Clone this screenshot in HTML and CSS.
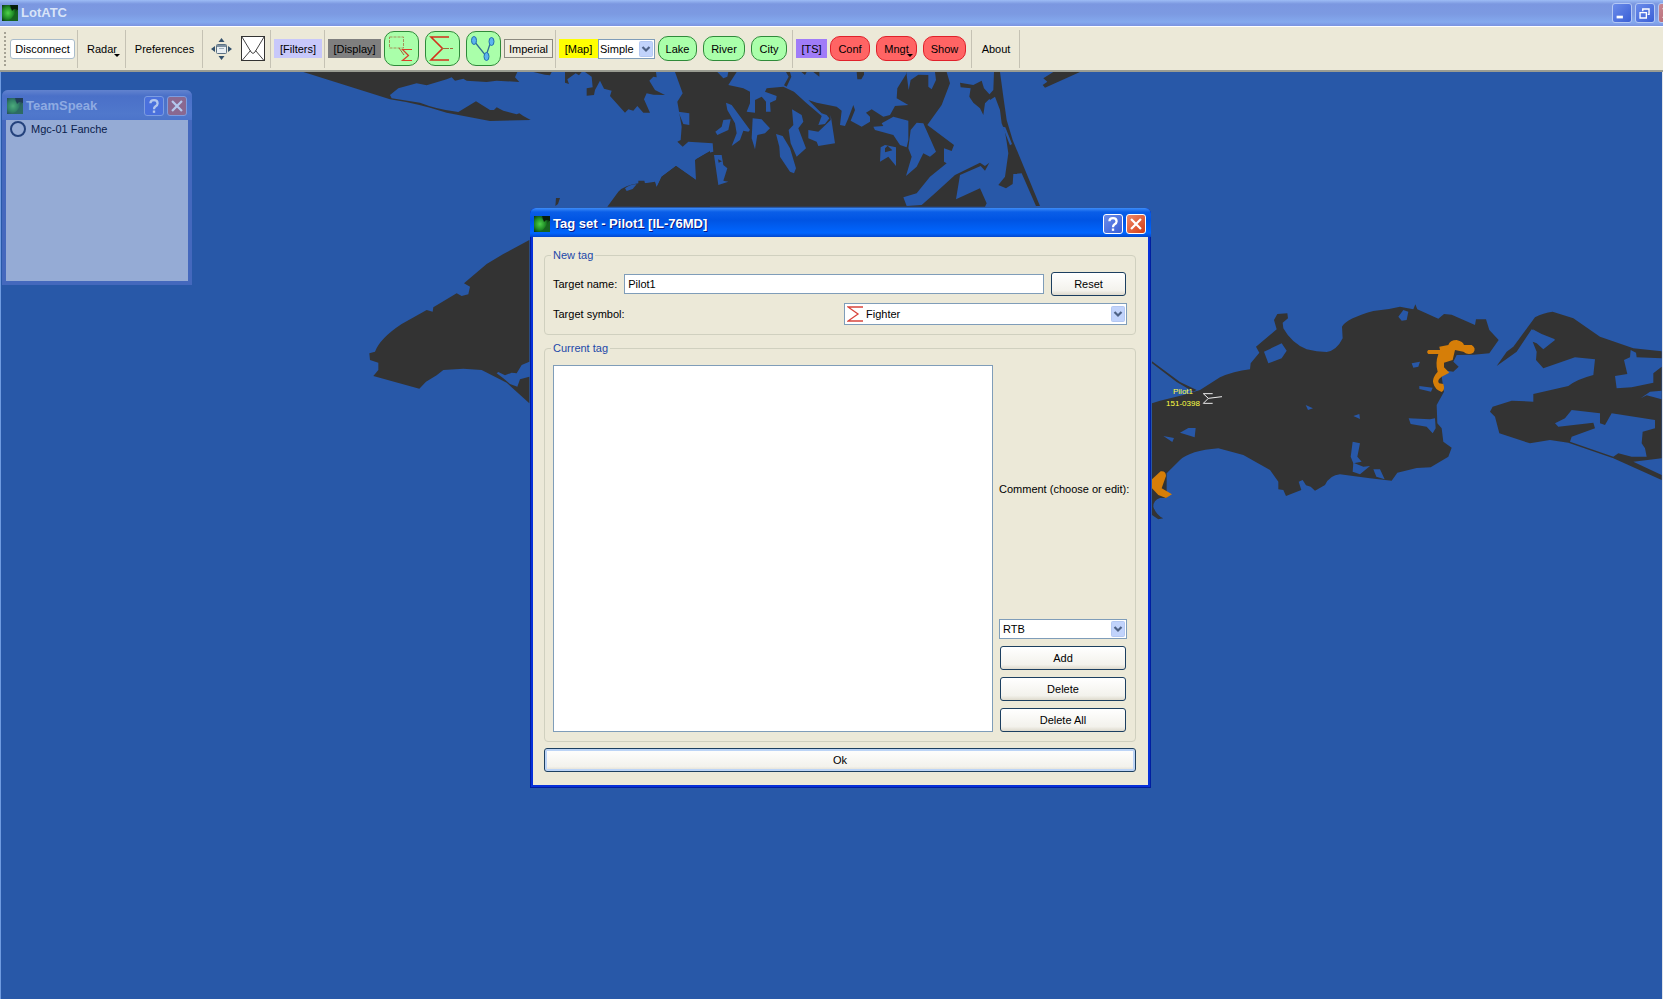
FILE: index.html
```html
<!DOCTYPE html>
<html lang="en">

<head>
    <meta charset="UTF-8" />
    <title>LotATC</title>
    <link rel="stylesheet" href="styles.css">
</head>

<body>
    <!-- shared symbols -->
    <svg class="defs" width="0" height="0" aria-hidden="true">
        <defs>
            <radialGradient id="radar" cx="0.4" cy="0.5" r="0.6">
                <stop offset="0" stop-color="#4fd24a" />
                <stop offset="0.6" stop-color="#1f8a26" />
                <stop offset="1" stop-color="#0c3a12" />
            </radialGradient>
            <symbol id="app-icon" viewBox="0 0 16 16">
                <rect width="16" height="16" fill="#17641f" />
                <path d="M0 0l7 1 2 3 6 1-3 5-3 4-5 2H0z" fill="url(#radar)" />
                <path d="M8 0h8v5l-4-1-2 2z" fill="#061d0a" />
            </symbol>
            <symbol id="arrow" viewBox="0 0 14 16">
                <rect x="0.5" y="0.5" width="13" height="15" rx="1" fill="#c1d3fb" stroke="#b4c8f2" />
                <path d="M3.5 6l3.5 3.5L10.5 6" fill="none" stroke="#4d6185" stroke-width="2.2" />
            </symbol>
            <symbol id="question" viewBox="0 0 20 20">
                <path d="M6 7Q6 3.500 10 3.500t4 3.600Q14 9 11.500 10.500 10 11.500 10 13.500" fill="none" stroke="currentColor" stroke-width="2.500" />
                <rect x="8.700" y="15" width="2.600" height="2.600" fill="currentColor" />
            </symbol>
            <symbol id="cross" viewBox="0 0 20 20">
                <path d="M4.500 4.500l11 11M15.500 4.500l-11 11" stroke="currentColor" stroke-width="2.500" />
            </symbol>
        </defs>
    </svg>

    <header class="titlebar">
        <svg class="app-icon"><use href="#app-icon" /></svg>
        <h1>LotATC</h1>
        <div class="window-buttons">
            <button class="win-btn" aria-label="Minimize"><svg viewBox="0 0 20 20"><rect x="4" y="13" width="7" height="3" fill="#fff" /></svg></button>
            <button class="win-btn" aria-label="Restore"><svg viewBox="0 0 20 20"><path d="M4.500 9.500h7v6h-7zM4 9.500h8M7.500 8V5.500h7v6H13M7 5.500h8" fill="none" stroke="#fff" stroke-width="1.500" /></svg></button>
            <button class="win-btn close" aria-label="Close"><svg><use href="#cross" /></svg></button>
        </div>
    </header>

    <nav class="toolbar">
        <span class="handle"></span>
        <div class="group"><button class="btn disconnect">Disconnect</button></div>
        <div class="group"><button class="flat menu">Radar</button></div>
        <div class="group"><button class="flat prefs">Preferences</button></div>
        <div class="group">
            <button class="icon-btn" aria-label="Center">
                <svg width="21" height="22" viewBox="0 0 21 22">
                    <rect x="5.500" y="6.500" width="10" height="9" rx="1" fill="#e8eef2" stroke="#5a7184" />
                    <path d="M6 8h9" stroke="#5a7184" stroke-width="1.500" />
                    <path d="M8 10.500h5" stroke="#9fb0bc" />
                    <path d="M10.500 0l3 4h-6zM10.500 22l3-4h-6zM0 11l4-3v6zM21 11l-4-3v6z" fill="#33506b" />
                </svg>
            </button>
            <button class="icon-btn" aria-label="Messages">
                <svg width="24" height="26" viewBox="0 0 24 26">
                    <rect x="0.500" y="0.500" width="23" height="24" fill="#fff" stroke="#333" />
                    <path d="M1 1l9 15q2 3 4 0L23 1M1 24.500l8.500-10M23 24.500l-8.500-10" fill="none" stroke="#444" />
                </svg>
            </button>
        </div>
        <div class="group"><span class="caption filters">[Filters]</span></div>
        <div class="group">
            <span class="caption display">[Display]</span>
            <button class="pill tall" aria-label="Selection symbols">
                <svg viewBox="0 0 33 33">
                    <rect x="4.500" y="5" width="14" height="11" fill="none" stroke="#a5925a" stroke-dasharray="3 1" />
                    <path d="M14 16l5 7" stroke="#a06a3a" />
                    <path d="M27 17.500H17.500l6 6-6 5h9.500" fill="none" stroke="#d8402a" stroke-width="1.200" />
                </svg>
            </button>
            <button class="pill tall" aria-label="Symbols">
                <svg viewBox="0 0 33 33">
                    <path d="M23 5H5l11.500 11.500L5 28h18" fill="none" stroke="#d3301c" stroke-width="1.600" />
                    <path d="M16 16.500h11" stroke="#a06a3a" stroke-dasharray="7 1" />
                </svg>
            </button>
            <button class="pill tall" aria-label="Links">
                <svg viewBox="0 0 33 33">
                    <path d="M7 9l12 15 5-15" fill="none" stroke="#2f6f8f" stroke-width="1.300" />
                    <g fill="#5cb4ee" stroke="#2370ae">
                        <ellipse cx="7" cy="8.500" rx="2.500" ry="4" />
                        <ellipse cx="24.500" cy="9.500" rx="2.500" ry="4" />
                        <ellipse cx="19.500" cy="24.500" rx="2.500" ry="4" />
                    </g>
                </svg>
            </button>
            <button class="unit">Imperial</button>
        </div>
        <div class="group">
            <span class="caption map-caption">[Map]</span>
            <div class="combo combo-map">
                <select aria-label="Map style"><option>Simple</option></select>
                <svg class="combo-arrow"><use href="#arrow" /></svg>
            </div>
            <button class="pill lake">Lake</button>
            <button class="pill river">River</button>
            <button class="pill city">City</button>
        </div>
        <div class="group">
            <span class="caption ts">[TS]</span>
            <button class="pill red conf">Conf</button>
            <button class="pill red mngt menu">Mngt</button>
            <button class="pill red show">Show</button>
        </div>
        <div class="group"><button class="flat about">About</button></div>
    </nav>

    <main class="map">
        <svg class="terrain" width="1663" height="927" viewBox="0 72 1663 927" aria-hidden="true">
            <!-- north west coast -->
            <g transform="translate(290 60) scale(0.33333)" fill="#333">
                <path d="M40 36L300 118Q380 130 470 158L600 183L722 180L700 168L688 160L680 163L640 152L620 142L612 150L600 150L558 124L505 156Q440 148 390 128L305 115L300 105L325 85L380 70L410 76L470 58L485 52L495 62L520 56L530 62L590 66L620 62L688 66L675 52L682 36Z" />
                <path d="M730 36h55l-5 10-15-2zM825 36v32l12 4-5-14 25-18 10 6 8-10z" />
                <path d="M885 36L905 50L908 82L890 85V107L912 105L915 90L930 62L942 86L965 92L960 108L1005 158L1015 148L1030 152L1042 138L1060 158H1080L1062 118L1070 100L1090 104L1125 105L1095 90L1078 62L1090 50L1100 52L1098 36Z" />
                <path d="M952 440L985 395Q1005 375 1045 370V362H1063L1065 370H1095L1100 382L1115 350L1158 318L1218 360L1215 300L1260 273V440Z" />
                <path d="M798 414h12l-6 18-8 6z" />
                <path d="M718 540L640 582L590 612L522 670L540 680L535 703L515 708L500 700L430 742L428 755L410 750L335 792Q270 835 255 875L238 880L240 900L265 908V930L250 948L388 986L408 965L440 946L460 930L520 926L575 930L650 968L718 1030V950L690 958L682 980L660 972L640 955L620 940L625 936L645 946L665 938L680 940L695 915L718 905Z" />
                <path d="M1005 385q20-14 35-12l-12 14-18 6z" fill="#2858a8" />
            </g>
            <!-- north shore -->
            <g transform="translate(640 60) scale(0.33333)">
                <path fill="#333" d="M105 36L128 100L112 125L125 200L122 240L112 245L128 260L145 245L218 250L220 275L200 280L168 298V360L108 318L65 350L50 382L45 365L0 372V440H1035L1040 430L1020 385L948 418L960 345L1022 318L1035 332L1048 308L1035 318L1020 308L945 345L885 400L845 435L800 438L790 412L830 400L870 350L920 310L912 305V265L935 273L942 255L862 195L905 135L930 70L920 36Z" />
                <g fill="#2858a8">
                    <path d="M290 36L265 75L310 85L330 95V130L320 155L345 158V120L365 110L378 125V155H392L390 128L408 120L410 108L375 95L380 85L430 80L462 95L500 130L545 168L535 195L555 192L568 175L560 165L545 160L505 120L530 128L590 140L605 152L600 195L615 198L625 175L640 135L645 150L632 182L665 200L690 185V170L678 158L695 148L730 170L750 165L765 138L805 135L770 115L772 85L800 40V36Z" />
                    <path d="M800 45L806 90L812 60L835 44L865 45V80L875 88L888 60L885 36H800Z" />
                    <path d="M258 128L275 135L330 210L325 215L310 212L300 240L275 258L290 220L285 190L262 150Z" />
                    <path d="M250 180L272 178L265 210L232 225L226 215L245 200Z" />
                    <path d="M338 175L365 178L390 205L375 220L352 225L345 268L335 235Z" />
                    <path d="M408 222L428 228L450 265L468 325L462 340L450 335L420 290L418 260Z" />
                    <path d="M456 148L485 165L490 185L475 205L498 265L470 290L452 250L446 210L460 195Z" />
                    <path d="M572 165L585 250L535 258L530 245L505 235V210L535 215L572 180Z" />
                    <path d="M700 200L730 198L725 190L760 170L805 182V240L800 262L780 255L760 225L705 210Z" />
                    <path d="M830 188L850 190L888 275L870 290L850 280L830 320L798 348L815 290L805 265L812 210Z" />
                    <path d="M722 262L735 255L768 262V318L745 290L720 305Z" />
                    <path d="M115 155L148 160V195L130 192Z" />
                    <path d="M222 285H245L250 315L262 325L250 362L265 365L235 375Z" />
                    <path d="M232 36H265L262 50L250 55Z" />
                </g>
                <g fill="#333">
                    <path d="M438 36l8 14-14 26 8 4 14-30-4-14zM484 36l11 9 5-9zM520 36l18 14V36zM650 36h22v8l-8 14h-12z" />
                    <path d="M735 265l8-8 14 14-22 6zM234 298l12 6-10 4z" />
                    <path d="M960 68L1000 75L1025 62L1032 85L1055 110L1035 130L1030 165L1020 145L1000 128L988 110L992 85L962 82Z" />
                    <path d="M1062 36H1080L1090 110L1100 180L1118 240L1200 438H1188L1145 340L1120 342L1118 372L1098 385L1075 375L1095 350L1105 280L1100 245L1095 215L1085 190L1080 150L1065 110L1050 120L1044 108L1060 90Z" />
                    <path d="M1210 55L1240 36H1320L1215 83L1208 75L1222 65Z" />
                </g>
                <path fill="#2858a8" d="M1088 200l8 2 20 50-6 4z" />
            </g>
            <!-- eastern peninsula -->
            <g transform="translate(1140 280) scale(0.33333)">
                <g fill="#333">
                    <path d="M36 370L60 362L130 345L180 330L240 292Q280 274 330 268L332 250L358 218L348 200L410 148L402 120L412 102L442 100L444 115L428 128L430 145Q455 190 500 208Q530 216 560 216Q590 212 608 175L606 140Q620 115 700 93Q740 90 780 80L820 88L826 73L832 88L895 116L912 102L935 104L1005 135L1008 118H1038L1048 150L1076 180L1048 220L1000 224L950 225L940 245L956 260L940 275L920 272L905 290L912 335L890 375L892 430L905 445L910 485L935 503L925 530L872 562L830 564L772 578L755 602L690 595L600 583Q570 585 555 615L525 632L512 620L498 616L488 600L476 605L484 630L438 648L430 630L415 628V605L390 570L310 525L235 505Q150 512 120 540L80 580V654H60Q40 660 40 680Q48 705 70 715L55 718L36 705Z" />
                    <path d="M36 244L120 306L170 330L160 335L110 306L36 250Z" />
                    <path d="M1070 258L1100 215L1120 200L1185 112Q1210 98 1238 95L1300 115L1380 170L1480 205L1565 214V235L1490 232L1488 218L1472 210L1470 232L1452 240L1462 282L1425 288L1430 325L1475 322L1540 308V280L1565 260V420L1545 420L1415 400L1395 435L1380 430V400L1295 390L1275 415L1245 430L1255 440L1360 428L1365 445L1295 470L1290 485L1420 530L1435 520L1475 530H1520L1515 505L1505 490L1508 455L1545 445V418H1565V535L1480 545L1565 585V600L1420 535L1285 488L1230 480L1170 490L1078 460L1065 410L1050 395L1058 380L1115 362L1180 365V342L1285 318Q1310 298 1360 285L1365 238L1305 232L1210 265L1188 240L1190 215L1178 185L1190 190L1210 208L1245 180L1205 165L1175 148L1130 215Z" />
                </g>
                <g fill="#2858a8">
                    <path d="M372 215L425 190L440 212L425 235L385 250ZM775 110L790 90L805 95L800 120L785 122Z" />
                    <path d="M815 250l25-5-5 15-15 3zM838 318l40 5-5 12-35-8zM497 375l22 10-15 5zM640 408l18-6 2 15z" />
                    <path d="M806 415L870 418L885 415L887 445L878 460L860 440L812 432ZM638 485L660 490L652 530L665 545L640 550L632 530Z" />
                    <path d="M640 548L670 560L690 558L660 583L638 575ZM700 568l20 0 14 30-25-8zM120 458l25-14h22l-3 28zM70 468l32 6-5 12z" />
                    <path d="M1502 355L1530 335L1565 332V358L1520 346ZM1178 148L1205 162L1245 178L1210 205L1195 185Z" />
                </g>
                <g fill="#d67e08">
                    <path d="M865 210H900L898 200L925 195Q930 180 950 180Q970 185 972 195H995Q1010 205 1000 218Q985 228 970 215L945 210L938 240L912 248V262L928 278L905 290Q890 300 897 310L910 312Q916 330 905 336Q885 330 880 310Q875 295 893 275Q885 250 895 222H865Q858 216 865 210Z" />
                    <path d="M36 598L62 574Q78 572 78 588L65 625L96 643L78 654L55 645L36 625Z" />
                </g>
                <path d="M218 341H190L205 355L190 370H218M205 355L246 350" fill="none" stroke="#eee" stroke-width="3" />
            </g>
        </svg>

        <div class="pilot">
            <span>Pilot1</span>
            <span>151-0398</span>
        </div>

        <section class="teamspeak">
            <header class="ts-title">
                <svg class="app-icon"><use href="#app-icon" /></svg>
                <h2>TeamSpeak</h2>
                <button class="win-btn" aria-label="Help"><svg><use href="#question" /></svg></button>
                <button class="win-btn close" aria-label="Close"><svg><use href="#cross" /></svg></button>
            </header>
            <ul class="ts-list">
                <li><span class="status"></span>Mgc-01 Fanche</li>
            </ul>
        </section>

        <section class="dialog" role="dialog" aria-labelledby="dialog-title">
            <header class="dialog-title">
                <svg class="app-icon"><use href="#app-icon" /></svg>
                <h2 id="dialog-title">Tag set - Pilot1 [IL-76MD]</h2>
                <button class="win-btn" aria-label="Help"><svg><use href="#question" /></svg></button>
                <button class="win-btn close" aria-label="Close"><svg><use href="#cross" /></svg></button>
            </header>
            <form class="dialog-body" onsubmit="return false">
                <fieldset>
                    <legend>New tag</legend>
                    <div class="row">
                        <label for="name">Target name:</label>
                        <input id="name" class="name" type="text" value="Pilot1">
                        <button class="btn reset" type="button">Reset</button>
                    </div>
                    <div class="row">
                        <label for="symbol">Target symbol:</label>
                        <div class="combo combo-symbol">
                            <select id="symbol"><option>Fighter</option></select>
                            <svg class="sigma" viewBox="0 0 16 16"><path d="M16 1H1l10 7-10 7h15" fill="none" stroke="#d8453c" stroke-width="1.300" /></svg>
                            <svg class="combo-arrow"><use href="#arrow" /></svg>
                        </div>
                    </div>
                </fieldset>
                <fieldset>
                    <legend>Current tag</legend>
                    <div class="columns">
                        <select class="tag-list" multiple aria-label="Current tag"></select>
                        <div class="side">
                            <label for="comment">Comment (choose or edit):</label>
                            <div class="combo">
                                <select id="comment"><option>RTB</option></select>
                                <svg class="combo-arrow"><use href="#arrow" /></svg>
                            </div>
                            <button class="btn" type="button">Add</button>
                            <button class="btn" type="button">Delete</button>
                            <button class="btn" type="button">Delete All</button>
                        </div>
                    </div>
                </fieldset>
                <button class="btn ok" type="submit">Ok</button>
            </form>
        </section>
    </main>
</body>

</html>
```

FILE: styles.css
```css
* {
    box-sizing: border-box;
}

body {
    margin: 0;
    height: 100vh;
    display: flex;
    flex-direction: column;
    overflow: hidden;
    font-family: "Liberation Sans", Arial, sans-serif;
    font-size: 11px;
    color: #000;
}

button,
input,
select {
    font: inherit;
    color: inherit;
    padding: 0;
    margin: 0;
}

h1,
h2 {
    margin: 0;
    flex: 1;
    font-size: 13px;
    line-height: 16px;
}

.defs {
    position: absolute;
}

.app-icon {
    width: 16px;
    height: 16px;
    flex-shrink: 0;
}

/* main window title */
.titlebar {
    display: flex;
    align-items: center;
    gap: 3px;
    height: 26px;
    padding-left: 2px;
    flex-shrink: 0;
    background: linear-gradient(#9dbcf5 0, #7b97e0 4px, #7c9ae2 14px, #84a9ee 22px, #7b93e0 26px);
    color: #d8e4f8;
}

.window-buttons {
    display: flex;
    gap: 3px;
    margin-right: -15px;
}

.win-btn {
    width: 20px;
    height: 20px;
    flex-shrink: 0;
    border: 1px solid #b4c8f5;
    border-radius: 3px;
    background: linear-gradient(135deg, #6b8cea, #3a5fd6);
    color: #fff;
}

.win-btn svg {
    display: block;
    width: 18px;
    height: 18px;
}

.win-btn.close {
    background: linear-gradient(135deg, #c98a94, #b0606c);
}

/* toolbar */
.toolbar {
    display: flex;
    align-items: center;
    height: 46px;
    flex-shrink: 0;
    padding-left: 4px;
    border-top: 1px solid #fff;
    border-bottom: 2px solid #9a9c92;
    background: #ece9d8;
}

.handle {
    width: 2px;
    height: 34px;
    margin-right: 1px;
    background: repeating-linear-gradient(#a5a294 0, #a5a294 2px, #ece9d8 2px, #ece9d8 4px);
}

.group {
    display: flex;
    align-items: center;
    height: 38px;
    padding: 0 2px 0 3px;
    border-right: 1px solid #c5c2b4;
}

.flat,
.icon-btn {
    height: 22px;
    border: 0;
    background: none;
}

.btn {
    height: 24px;
    border: 1px solid #1c3f60;
    border-radius: 3px;
    background: linear-gradient(#fff, #f3f2ec 80%, #dedacd);
}

.disconnect {
    width: 65px;
    height: 20px;
    border-color: #a9bccb;
    background: #fff;
}

.flat {
    width: 42px;
}

.flat.prefs {
    width: 71px;
}

.menu {
    position: relative;
}

.menu::after {
    content: "";
    position: absolute;
    right: 3px;
    bottom: 3px;
    border: 3px solid transparent;
    border-top-color: #000;
    border-bottom: 0;
}

.icon-btn {
    display: flex;
    align-items: center;
    justify-content: center;
    width: 31px;
    height: 30px;
}

.caption {
    height: 19px;
    line-height: 20px;
    text-align: center;
}

.filters {
    width: 48px;
    background: #c8c8fa;
}

.display {
    width: 53px;
    background: #7f7f7f;
}

.map-caption {
    width: 39px;
    background: #ff0;
}

.ts {
    width: 31px;
    background: #a07cf8;
}

.pill {
    height: 25px;
    margin: 0 3px;
    border: 1px solid #2f8a3a;
    border-radius: 10px;
    background: #aaffaa;
}

.pill.tall {
    width: 35px;
    height: 35px;
}

.pill.tall svg {
    display: block;
    width: 33px;
    height: 33px;
}

.pill.red {
    border-color: #e0202a;
    background: #ff6464;
}

.lake {
    width: 39px;
}

.river {
    width: 42px;
}

.city {
    width: 36px;
}

.conf {
    width: 40px;
}

.mngt {
    width: 41px;
}

.show {
    width: 43px;
}

.unit {
    width: 49px;
    height: 19px;
    border: 1px solid #8c8a80;
    background: #efece0;
}

/* drop-downs */
.combo {
    position: relative;
    height: 20px;
}

.combo select {
    display: block;
    appearance: none;
    width: 100%;
    height: 100%;
    padding: 0 18px 0 3px;
    border: 1px solid #7f9db9;
    border-radius: 0;
    background: #fff;
}

.combo-arrow {
    position: absolute;
    top: 2px;
    right: 2px;
    width: 14px;
    height: calc(100% - 4px);
    pointer-events: none;
}

.combo-map {
    width: 57px;
}

.combo-map select {
    padding: 0 15px 0 1px;
}

.combo-symbol {
    height: 22px;
}

.combo-symbol select {
    padding-left: 21px;
}

.sigma {
    position: absolute;
    top: 3px;
    left: 3px;
    width: 16px;
    height: 16px;
    pointer-events: none;
}

/* map */
.map {
    position: relative;
    flex: 1;
    overflow: hidden;
    background: #2858a8;
    border-left: 1px solid #6f9be0;
    border-right: 1px solid #dfe3ea;
}

.terrain {
    display: block;
    margin-left: -1px;
}

.pilot {
    position: absolute;
    top: 314px;
    left: 1162px;
    width: 40px;
    display: flex;
    flex-direction: column;
    text-align: center;
    font-family: "Liberation Sans Narrow", "Liberation Sans", sans-serif;
    font-size: 8px;
    line-height: 12px;
    color: #ff4;
}

/* TeamSpeak window */
.teamspeak {
    position: absolute;
    top: 18px;
    left: 1px;
    width: 190px;
    padding: 0 4px 4px;
    border-radius: 6px 6px 0 0;
    background: #4468bd;
}

.ts-title {
    display: flex;
    align-items: center;
    gap: 3px;
    height: 30px;
    margin: 0 -4px;
    padding: 2px 5px 0;
    border-radius: 6px 6px 0 0;
    background: linear-gradient(#6283cf, #4a70c8 6px, #5078cc 24px, #4c74ca);
    color: #8fabe2;
}

.ts-title .app-icon {
    opacity: 0.6;
}

.ts-title .win-btn {
    border-color: #7c9ce0;
    background: #4a70dc;
    color: #b4c8ee;
}

.ts-title .close {
    background: #8a6890;
}

.ts-list {
    margin: 0;
    padding: 1px 4px;
    height: 161px;
    list-style: none;
    background: #95abd5;
    color: #0a1c4c;
}

.ts-list li {
    display: flex;
    align-items: center;
    gap: 5px;
    height: 16px;
}

.status {
    width: 16px;
    height: 16px;
    border: 2px solid #24427c;
    border-radius: 50%;
}

/* tag dialog */
.dialog {
    position: absolute;
    top: 136px;
    left: 529px;
    width: 621px;
    padding: 0 3px 3px;
    border-radius: 6px 6px 0 0;
    background: #0831d9;
    box-shadow: inset -1px -1px #001ea0, inset 1px 0 #001ea0;
}

.dialog-title {
    display: flex;
    align-items: center;
    gap: 3px;
    height: 29px;
    margin: 0 -3px;
    padding: 2px 5px 0 4px;
    border-radius: 6px 6px 0 0;
    background: linear-gradient(#3d8cf8, #0a5ee8 4px, #0054e3 12px, #0066ff 25px, #0347cc);
    color: #fff;
}

.dialog-title h2 {
    text-shadow: 1px 1px #0a1883;
}

.dialog-title .win-btn {
    border-color: #fff;
}

.dialog-title .close {
    background: linear-gradient(135deg, #f08a6a, #d43c14);
}

.dialog-body {
    display: flex;
    flex-direction: column;
    gap: 6px;
    padding: 11px 12px 13px 11px;
    background: #ece9d8;
}

fieldset {
    min-width: 0;
    margin: 0;
    padding: 10px 8px 9px;
    border: 1px solid #d0d0bf;
    border-radius: 4px;
}

legend {
    height: 14px;
    padding: 0 2px;
    margin-left: -2px;
    line-height: 14px;
    color: #1c48a8;
}

.row {
    display: flex;
    align-items: center;
    gap: 7px;
}

.row + .row {
    margin-top: 7px;
    justify-content: space-between;
}

.name {
    flex: 1;
    min-width: 0;
    height: 20px;
    padding: 0 3px;
    border: 1px solid #7f9db9;
    background: #fff;
}

.reset {
    width: 75px;
    margin-right: 1px;
}

.row .combo {
    width: 283px;
}

.columns {
    display: flex;
    gap: 6px;
}

.tag-list {
    flex: 1;
    height: 367px;
    border: 1px solid #7f9db9;
    border-radius: 0;
    background: #fff;
}

.side {
    display: flex;
    flex-direction: column;
    gap: 7px;
    width: 128px;
}

.side label {
    display: flex;
    flex: 1;
    align-items: center;
    white-space: nowrap;
}

.side .btn {
    margin: 0 1px;
}

.ok {
    box-shadow: inset 0 0 0 2px #bcd4f6;
}
```
